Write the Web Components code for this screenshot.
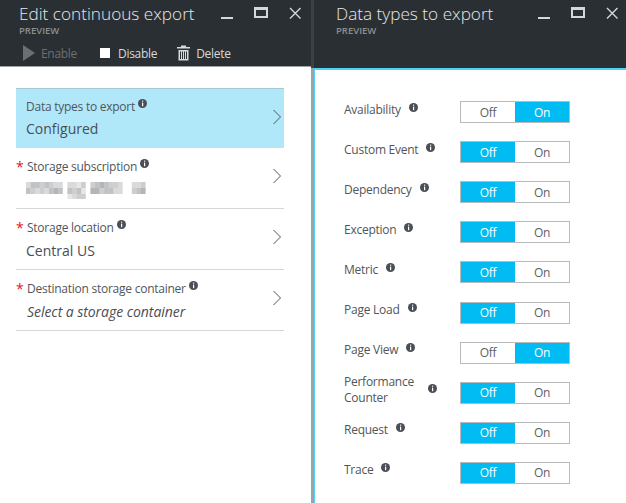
<!DOCTYPE html>
<html>
<head>
<meta charset="utf-8">
<title>Edit continuous export</title>
<style>
    html, body { margin: 0; height: 100%; overflow: hidden; }
    body {
        display: flex;
        width: 626px;
        height: 503px;
        background: #fff;
        font-family: "Open Sans", "Liberation Sans", sans-serif;
    }
</style>
</head>
<body>
    <az-blade title="Edit continuous export" style="width:311px">
        <az-command slot="commands" icon="play" disabled>Enable</az-command>
        <az-command slot="commands" icon="stop">Disable</az-command>
        <az-command slot="commands" icon="trash">Delete</az-command>
        <div style="height:21px"></div>
        <az-selector label="Data types to export" selected>Configured</az-selector>
        <az-selector label="Storage subscription" required blurred></az-selector>
        <az-selector label="Storage location" required>Central US</az-selector>
        <az-selector label="Destination storage container" required placeholder>Select a storage container</az-selector>
    </az-blade>
    <az-blade title="Data types to export" active style="flex:1">
        <div style="height:22px"></div>
        <az-toggle-row label="Availability" value="on"></az-toggle-row>
        <az-toggle-row label="Custom Event"></az-toggle-row>
        <az-toggle-row label="Dependency"></az-toggle-row>
        <az-toggle-row label="Exception"></az-toggle-row>
        <az-toggle-row label="Metric"></az-toggle-row>
        <az-toggle-row label="Page Load"></az-toggle-row>
        <az-toggle-row label="Page View" value="on"></az-toggle-row>
        <az-toggle-row label="Performance Counter" wrap></az-toggle-row>
        <az-toggle-row label="Request"></az-toggle-row>
        <az-toggle-row label="Trace"></az-toggle-row>
    </az-blade>

<script>
const ICONS = {
    play: '<svg width="13" height="16" viewBox="0 0 13 16"><path d="M1 0 L13 8 L1 16 Z" fill="currentColor"/></svg>',
    stop: '<svg width="15" height="16" viewBox="0 0 15 16"><rect x="3" y="3" width="10" height="10" fill="#fff"/></svg>',
    trash: '<svg width="13" height="16" viewBox="0 0 13 16"><path d="M4 0.5h5v1.5h4v1.5H0V2h4z M1.5 5h10v10.5h-10z" fill="currentColor"/><path d="M3.5 6.5v7.5M5.5 6.5v7.5M7.5 6.5v7.5M9.5 6.5v7.5" stroke="#2a2f33" stroke-width="1"/></svg>'
};

// light pixelated block that stands in for the hidden subscription name
const MOSAIC = [
    '35545433 3324 4565443  334',
    '54343565 5452 6645533  456',
    '         2344             '
];

class AzInfo extends HTMLElement {
    constructor() {
        super();
        this.attachShadow({ mode: 'open' });
        this.shadowRoot.innerHTML = `
            <style>
                :host { display: inline-flex; width: 9px; height: 9px; color: #4a4f55; }
            </style>
            <svg width="9" height="9" viewBox="0 0 9 9">
                <circle cx="4.5" cy="4.5" r="4.5" fill="currentColor"/>
                <rect x="4" y="1.6" width="1.2" height="1.1" fill="#fff"/>
                <rect x="4" y="3.6" width="1.2" height="3.6" fill="#fff"/>
            </svg>`;
    }
}
customElements.define('az-info', AzInfo);

class AzCommand extends HTMLElement {
    constructor() {
        super();
        this.attachShadow({ mode: 'open' });
    }
    connectedCallback() {
        const icon = ICONS[this.getAttribute('icon')] || '';
        this.shadowRoot.innerHTML = `
            <style>
                :host { display: inline-flex; align-items: center; gap: 6px; font-size: 12px; letter-spacing: -.3px; color: #d8dadb; height: 16px; }
                :host([disabled]) { color: #6b6f72; }
                svg { display: block; }
            </style>
            ${icon}<slot></slot>`;
    }
}
customElements.define('az-command', AzCommand);

class AzBlade extends HTMLElement {
    constructor() {
        super();
        this.attachShadow({ mode: 'open' });
    }
    connectedCallback() {
        this.shadowRoot.innerHTML = `
            <style>
                :host { display: flex; flex-direction: column; height: 100%; box-sizing: border-box; }
                :host([active]) { border-left: 3px solid #a0a2a4; }
                header {
                    height: 67px;
                    box-sizing: border-box;
                    background: #2a2f33;
                    padding: 0 0 0 19px;
                    flex: none;
                    position: relative;
                    color: #e6e7e8;
                    border-bottom: 1px solid #9fa1a3;
                }
                :host([active]) header { margin-left: -3px; padding-left: 22px; border-bottom: 0; height: 68px; border-left: 3px solid #3b4044; }
                h1 { margin: 0; padding-top: 1px; font-size: 17.2px; font-weight: 300; line-height: 25px; white-space: nowrap; }
                .sub { font-size: 9.5px; line-height: 12px; font-weight: 600; color: #8c9092; margin-top: -1px; }
                .commands { display: flex; gap: 20px; margin-top: 8px; margin-left: 3px; }
                .win { position: absolute; top: 7px; right: 10px; display: flex; gap: 21px; align-items: flex-start; }
                :host([active]) .win { right: 8px; }
                .win svg { display: block; }
                main { flex: 1; padding: 0 27px 0 16px; }
                :host([active]) main { border-left: 1px solid #4fd3f5; border-top: 2px solid #4fd3f5; padding: 0; }
            </style>
            <header>
                <h1>${this.getAttribute('title')}</h1>
                <div class="sub">PREVIEW</div>
                <div class="commands"><slot name="commands"></slot></div>
                <div class="win">
                    <svg width="12" height="12" viewBox="0 0 12 12"><rect x="0" y="10" width="12" height="2" fill="#d5d7d8"/></svg>
                    <svg width="14" height="12" viewBox="0 0 14 12"><rect x="0" y="0" width="14" height="11" fill="#d5d7d8"/><rect x="2" y="3" width="10" height="6" fill="#2a2f33"/></svg>
                    <svg width="12" height="12" viewBox="0 0 12 12"><path d="M1 1 L11.5 11.5 M11.5 1 L1 11.5" stroke="#d5d7d8" stroke-width="1.4" fill="none"/></svg>
                </div>
            </header>
            <main><slot></slot></main>`;
    }
}
customElements.define('az-blade', AzBlade);

class AzSelector extends HTMLElement {
    constructor() {
        super();
        this.attachShadow({ mode: 'open' });
    }
    connectedCallback() {
        const star = this.hasAttribute('required') ? '<span class="star">*</span>' : '';
        let cells = '';
        if (this.hasAttribute('blurred')) {
            MOSAIC.forEach((row, y) => {
                [...row].forEach((c, x) => {
                    if (c === ' ') return;
                    cells += `<rect x="${x * 4.6}" y="${y * 6}" width="4.6" height="6" fill="#8c8f92" opacity="${c * 0.11}"/>`;
                });
            });
        }
        const blur = cells ? `<svg class="mosaic" width="120" height="17" viewBox="0 0 120 17"><defs><filter id="b"><feGaussianBlur stdDeviation=".7"/></filter></defs><g filter="url(#b)">${cells}</g></svg>` : '';
        this.shadowRoot.innerHTML = `
            <style>
                :host {
                    display: flex;
                    align-items: center;
                    justify-content: space-between;
                    height: 61px;
                    box-sizing: border-box;
                    padding: 2px 2px 0 10px;
                    border-bottom: 1px solid #d6d7d8;
                    position: relative;
                    color: #50565c;
                }
                :host([selected]) { background: #b0e8f9; border-top: 1px solid #a9c9d4; border-bottom: 0; height: 60px; padding-top: 0; }
                :host([blurred]) { padding-top: 4px; }
                .label { display: flex; align-items: flex-start; gap: 3px; font-size: 12px; letter-spacing: -.25px; line-height: 17px; }
                :host([required]) .label { padding-left: 1px; }
                az-info { margin-top: 1px; }
                .value { font-size: 14px; line-height: 20px; margin-top: 5px; color: #484e54; min-height: 20px; }
                :host([selected]) .value { margin-top: 4px; }
                :host([placeholder]) .value { font-style: italic; padding-left: 1px; letter-spacing: -.05px; }
                .star { position: absolute; left: 0; top: 9px; color: #e81123; font-size: 14px; line-height: 20px; }
                .mosaic { display: block; margin-top: 7px; margin-bottom: -6px; }
                svg.chev { display: block; margin-top: -6px; }
                :host([selected]) svg.chev { margin-top: -4px; }
                :host([blurred]) svg.chev { margin-top: -8px; }
            </style>
            ${star}
            <div>
                <div class="label">${this.getAttribute('label')}<az-info></az-info></div>
                <div class="value"><slot></slot>${blur}</div>
            </div>
            <svg class="chev" width="10" height="16" viewBox="0 0 10 16"><path d="M1.5 1 L8.5 8 L1.5 15" fill="none" stroke="#50565c" stroke-width="1"/></svg>`;
    }
}
customElements.define('az-selector', AzSelector);

class AzToggleRow extends HTMLElement {
    constructor() {
        super();
        this.attachShadow({ mode: 'open' });
    }
    connectedCallback() {
        const on = this.getAttribute('value') === 'on';
        this.shadowRoot.innerHTML = `
            <style>
                :host {
                    display: flex;
                    align-items: center;
                    height: 40.1px;
                    padding-left: 29px;
                    color: #50565c;
                    font-size: 12px;
                    letter-spacing: -.25px;
                }
                .name { width: 116px; display: flex; align-items: center; gap: 8px; flex: none; line-height: 16px; margin-top: -5px; }
                :host([wrap]) .name span { width: 76px; }
                az-info { margin-top: -5px; }
                :host([wrap]) az-info { margin-top: -3px; }
                .toggle {
                    display: flex;
                    width: 110px;
                    height: 22px;
                    box-sizing: border-box;
                    border: 1px solid #b8babc;
                    font-size: 12px;
                    flex: none;
                }
                .toggle div { flex: 1; display: flex; align-items: center; justify-content: center; color: #5c6166; }
                .toggle div.sel { background: #00bcf2; color: #fff; }
            </style>
            <div class="name"><span>${this.getAttribute('label')}</span><az-info></az-info></div>
            <div class="toggle">
                <div class="${on ? '' : 'sel'}">Off</div>
                <div class="${on ? 'sel' : ''}">On</div>
            </div>`;
    }
}
customElements.define('az-toggle-row', AzToggleRow);
</script>
</body>
</html>
